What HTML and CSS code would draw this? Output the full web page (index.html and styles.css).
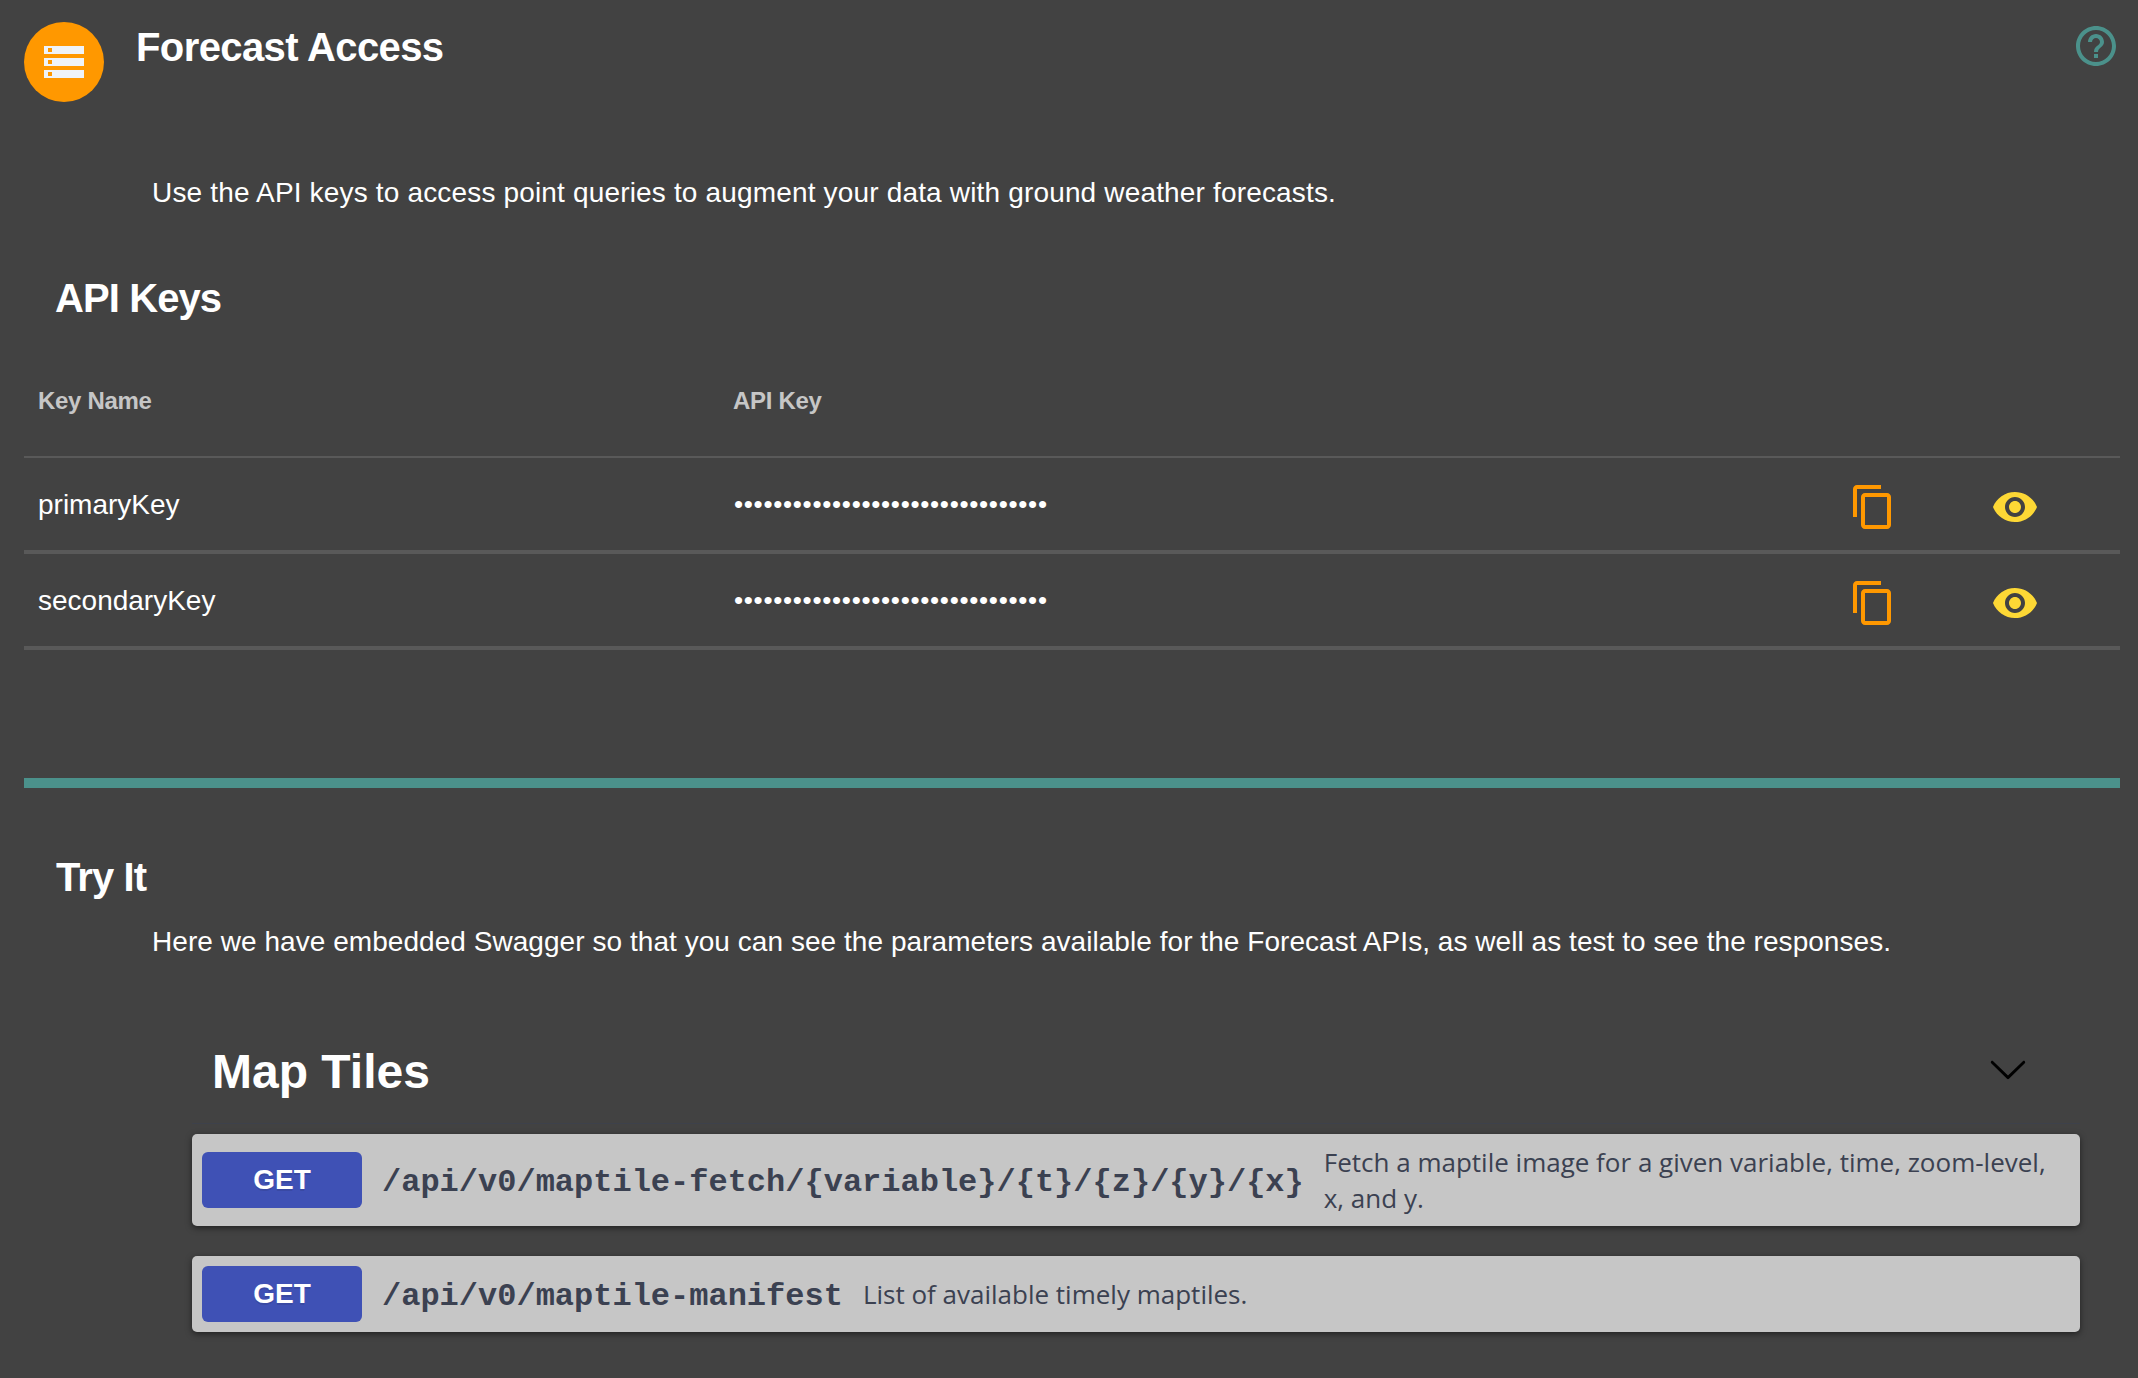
FILE: index.html
```html
<!DOCTYPE html>
<html lang="en">
<head>
<meta charset="utf-8">
<title>Forecast Access</title>
<link rel="stylesheet" href="styles.css">
</head>
<body>
<main class="page">
  <header class="header">
    <span class="badge">
      <svg class="icon" viewBox="0 0 24 24"><path d="M2 20h20v-4H2v4zm2-3h2v2H4v-2zM2 4v4h20V4H2zm4 3H4V5h2v2zm-4 7h20v-4H2v4zm2-3h2v2H4v-2z"/></svg>
    </span>
    <h1 class="title">Forecast Access</h1>
    <svg class="icon help" viewBox="0 0 24 24"><path d="M11 18h2v-2h-2v2zm1-16C6.48 2 2 6.48 2 12s4.480 10 10 10 10-4.480 10-10S17.520 2 12 2zm0 18c-4.410 0-8-3.590-8-8s3.590-8 8-8 8 3.590 8 8-3.590 8-8 8zm0-14c-2.210 0-4 1.790-4 4h2c0-1.100.900-2 2-2s2 .900 2 2c0 2-3 1.750-3 5h2c0-2.250 3-2.500 3-5 0-2.210-1.790-4-4-4z"/></svg>
  </header>

  <p class="intro">Use the API keys to access point queries to augment your data with ground weather forecasts.</p>

  <h2 class="section-title">API Keys</h2>
  <div class="keys">
    <div class="keys-row keys-head"><span>Key Name</span><span class="api-head">API Key</span></div>
    <div class="keys-row">
      <span class="key-name">primaryKey</span>
      <span class="secret">••••••••••••••••••••••••••••••••</span>
      <svg class="icon copy" viewBox="0 0 24 24"><path d="M16 1H4c-1.100 0-2 .900-2 2v14h2V3h12V1zm3 4H8c-1.100 0-2 .900-2 2v14c0 1.100.900 2 2 2h11c1.100 0 2-.900 2-2V7c0-1.100-.900-2-2-2zm0 16H8V7h11v14z"/></svg>
      <svg class="icon eye" viewBox="0 0 24 24"><path d="M12 4.500C7 4.500 2.730 7.610 1 12c1.730 4.390 6 7.500 11 7.500s9.270-3.110 11-7.500c-1.730-4.390-6-7.500-11-7.500zM12 17c-2.760 0-5-2.240-5-5s2.240-5 5-5 5 2.240 5 5-2.240 5-5 5zm0-8c-1.660 0-3 1.340-3 3s1.340 3 3 3 3-1.340 3-3-1.340-3-3-3z"/></svg>
    </div>
    <div class="keys-row">
      <span class="key-name">secondaryKey</span>
      <span class="secret">••••••••••••••••••••••••••••••••</span>
      <svg class="icon copy" viewBox="0 0 24 24"><path d="M16 1H4c-1.100 0-2 .900-2 2v14h2V3h12V1zm3 4H8c-1.100 0-2 .900-2 2v14c0 1.100.900 2 2 2h11c1.100 0 2-.900 2-2V7c0-1.100-.900-2-2-2zm0 16H8V7h11v14z"/></svg>
      <svg class="icon eye" viewBox="0 0 24 24"><path d="M12 4.500C7 4.500 2.730 7.610 1 12c1.730 4.390 6 7.500 11 7.500s9.270-3.110 11-7.500c-1.730-4.390-6-7.500-11-7.500zM12 17c-2.760 0-5-2.240-5-5s2.240-5 5-5 5 2.240 5 5-2.240 5-5 5zm0-8c-1.660 0-3 1.340-3 3s1.340 3 3 3 3-1.340 3-3-1.340-3-3-3z"/></svg>
    </div>
  </div>

  <hr class="divider">

  <h2 class="section-title try-title">Try It</h2>
  <p class="intro try-intro">Here we have embedded Swagger so that you can see the parameters available for the Forecast APIs, as well as test to see the responses.</p>

  <section class="swagger">
    <div class="tag">
      <h3 class="tag-name">Map Tiles</h3>
      <svg class="arrow" viewBox="0 0 20 20"><path d="M17.418 6.109c.272-.268.709-.268.979 0s.271.701 0 .969l-7.908 7.830c-.270.268-.707.268-.979 0l-7.908-7.830c-.270-.268-.270-.701 0-.969.271-.268.709-.268.979 0L10 13.250l7.418-7.141z"/></svg>
    </div>
    <div class="operation tall">
      <span class="method">GET</span>
      <code class="path">/api/v0/maptile-fetch/{variable}/{t}/{z}/{y}/{x}</code>
      <span class="summary">Fetch a maptile image for a given variable, time, zoom-level, x, and y.</span>
    </div>
    <div class="operation">
      <span class="method">GET</span>
      <code class="path">/api/v0/maptile-manifest</code>
      <span class="summary">List of available timely maptiles.</span>
    </div>
  </section>
</main>
</body>
</html>
```
FILE: styles.css
```css
* { box-sizing: border-box; }

body {
  margin: 0;
  background: #424242;
  color: #fff;
  font-family: "Liberation Sans", Helvetica, Arial, sans-serif;
}

h1, h2, h3, p { margin: 0; }

.page {
  display: flex;
  flex-direction: column;
  width: 2138px;
  height: 1378px;
  padding: 22px 18px 0 24px;
  overflow: hidden;
}

.icon { display: block; width: 48px; height: 48px; fill: currentColor; }

.header { display: flex; align-items: flex-start; height: 80px; }

.badge {
  display: flex;
  align-items: center;
  justify-content: center;
  width: 80px;
  height: 80px;
  border-radius: 50%;
  background: #ff9800;
  color: #eff3f8;
}

.title, .section-title {
  font-size: 40px;
  line-height: 48px;
  font-weight: 700;
  letter-spacing: -0.6px;
}

.title { margin: 1px auto 0 32px; }

.help { color: #4b918b; }

.intro {
  margin: 74px 0 0 128px;
  font-size: 28px;
  line-height: 34px;
  letter-spacing: 0.165px;
}

.section-title { margin: 64px 0 0 31px; letter-spacing: -0.9px; }

.keys { margin-top: 54px; }

.keys-row {
  display: grid;
  grid-template-columns: 695px 1fr 142px 115px;
  align-items: center;
  height: 96px;
  padding: 0 14px;
  border-bottom: 4px solid #595959;
  font-size: 28px;
}

.keys-head {
  align-items: start;
  height: 82px;
  padding-top: 10px;
  border-bottom-width: 2px;
  color: #c6c6c6;
  font-size: 24px;
  line-height: 30px;
  font-weight: 700;
  letter-spacing: -0.3px;
}

.key-name { padding-top: 2px; }

.secret { padding-left: 1px; font-size: 26px; letter-spacing: 0.7px; }

.copy { margin-top: 6px; color: #ff9800; }
.eye { margin-top: 6px; color: #fdd835; }

.divider {
  width: 100%;
  height: 10px;
  margin: 128px 0 0;
  border: 0;
  background: #4b918b;
}

.try-title { margin-top: 65px; margin-left: 32px; }
.try-intro { margin-top: 24px; letter-spacing: 0.05px; }

.swagger { margin: 80px 40px 0 168px; }

.tag {
  display: flex;
  align-items: center;
  justify-content: space-between;
  height: 85px;
  margin-bottom: 10px;
  padding: 0 52px 20px 20px;
  border-bottom: 1px solid rgba(59, 65, 81, 0.6);
}

.tag-name { margin-top: 2px; font-size: 48px; line-height: 60px; }

.arrow { width: 40px; height: 40px; margin-bottom: 4px; }

.operation {
  display: flex;
  align-items: center;
  height: 76px;
  margin-bottom: 30px;
  padding: 0 10px;
  border-radius: 5px;
  background: #c6c6c6;
  box-shadow: 0 2px 6px rgba(0, 0, 0, 0.5);
  color: #3b4151;
}

.operation.tall { height: 92px; }

.method {
  flex: none;
  width: 160px;
  height: 56px;
  border-radius: 6px;
  background: #3f51b5;
  color: #fff;
  font-size: 28px;
  line-height: 56px;
  font-weight: 700;
  text-align: center;
  text-shadow: 0 2px 0 rgba(0, 0, 0, 0.1);
}

.path {
  flex: none;
  padding: 5px 20px 0;
  font-family: "Liberation Mono", "Courier New", monospace;
  font-size: 32px;
  font-weight: 700;
}

.summary {
  font-family: "Open Sans", sans-serif;
  font-size: 26px;
  line-height: 36px;
}
```
